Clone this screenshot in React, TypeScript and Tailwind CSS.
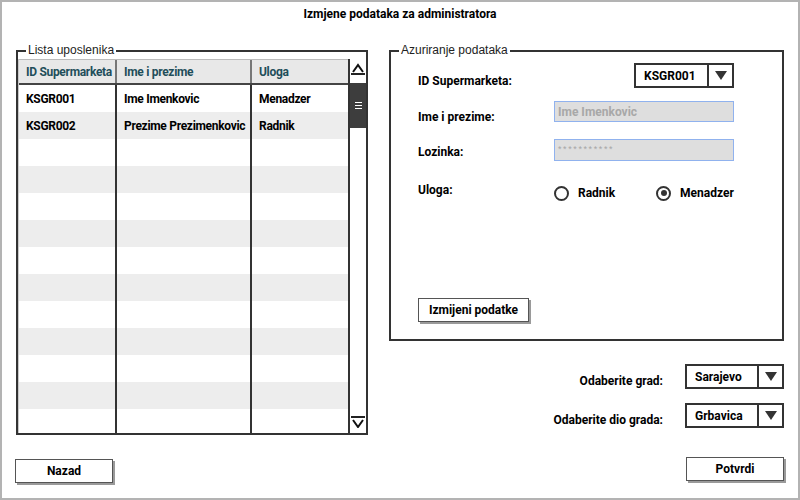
const rows = [
  { id: 'KSGR001', name: 'Ime Imenkovic', role: 'Menadzer' },
  { id: 'KSGR002', name: 'Prezime Prezimenkovic', role: 'Radnik' },
  ...Array.from({ length: 11 }, () => ({ id: '', name: '', role: '' })),
];

const narrow = "font-['Liberation_Sans_Narrow',Roboto,sans-serif] font-bold";
const legend = "ml-[8px] px-[2px] font-['Liberation_Sans',Arial,sans-serif] text-[12px] leading-[13px] text-[#222]";

function Dropdown({ value, width, split }: { value: string; width: string; split: string }) {
  return (
    <div className={`flex h-[25px] border-2 border-[#333] bg-white ${width}`}>
      <div className={`flex items-center pl-[8px] text-[12px] text-black ${narrow} ${split}`}>{value}</div>
      <div className="flex flex-1 items-center justify-center border-l-2 border-[#333]">
        <svg width="12" height="9" viewBox="0 0 12 9">
          <path d="M0 0 H12 L6 9 Z" fill="#333" />
        </svg>
      </div>
    </div>
  );
}

function Button({ label, className }: { label: string; className: string }) {
  return (
    <div
      className={`flex h-[24px] items-center justify-center border border-[#555] bg-white text-[12px] text-black shadow-[2px_2px_0_#9a9a9a] ${narrow} ${className}`}
    >
      {label}
    </div>
  );
}

function Radio({ checked, label, className = '' }: { checked?: boolean; label: string; className?: string }) {
  return (
    <div className={`flex items-center gap-[9px] ${className}`}>
      <div className="flex h-[15px] w-[15px] items-center justify-center rounded-full border-2 border-[#333]">
        {checked && <div className="h-[6px] w-[6px] rounded-full bg-[#333]" />}
      </div>
      <span className={`text-[12px] text-black ${narrow}`}>{label}</span>
    </div>
  );
}

function Scrollbar() {
  return (
    <div className="flex w-[18px] flex-col border-l-2 border-[#333] bg-white">
      <div className="mx-[1px] flex h-[16px] items-end justify-center border-b-2 border-[#222]">
        <svg width="12" height="10" viewBox="0 0 12 10">
          <path d="M1 9 L6 2 L11 9" fill="none" stroke="#111" strokeWidth="2" />
        </svg>
      </div>
      <div className="h-[8px]" />
      <div className="flex h-[45px] flex-col items-center justify-center gap-[2px] bg-[#3d3d3d]">
        <div className="h-[1px] w-[7px] bg-white" />
        <div className="h-[1px] w-[7px] bg-white" />
        <div className="h-[1px] w-[7px] bg-white" />
      </div>
      <div className="flex-1" />
      <div className="mx-[1px] flex h-[17px] items-start justify-center border-t-2 border-[#222]">
        <svg width="12" height="10" viewBox="0 0 12 10">
          <path d="M1 2 L6 9 L11 2" fill="none" stroke="#111" strokeWidth="2" />
        </svg>
      </div>
    </div>
  );
}

export default function App() {
  return (
    <div className="flex h-[500px] w-[800px] flex-col overflow-hidden border-2 border-[#b3b3b3] bg-white">
      <div className={`h-[42px] pt-[4px] text-center text-[12px] leading-[16px] text-black ${narrow}`}>
        Izmjene podataka za administratora
      </div>

      <div className="flex h-[391px]">
        <fieldset className="ml-[14px] h-[391px] w-[352px] border-2 border-[#333]">
          <legend className={legend}>Lista uposlenika</legend>
          <div className="mt-[2px] flex h-[374px] overflow-hidden">
            <div className="flex-1 overflow-hidden border-l border-[#c8c8c8]">
              <div className="grid h-[26px] grid-cols-[98px_135px_96px] border-t border-b-2 border-t-[#bbb] border-b-[#444] bg-[#e8e8e8] text-[12px] tracking-[-0.3px] text-[#1f4e5a]">
                <div className={`flex items-center border-r-2 border-[#777] pl-[7px] ${narrow}`}>ID Supermarketa</div>
                <div className={`flex items-center border-r-2 border-[#777] pl-[7px] ${narrow}`}>Ime i prezime</div>
                <div className={`flex items-center pl-[7px] ${narrow}`}>Uloga</div>
              </div>
              {rows.map((r, i) => (
                <div
                  key={i}
                  className={`grid h-[27px] grid-cols-[98px_135px_96px] text-[12px] tracking-[-0.3px] text-black ${i % 2 === 1 ? 'bg-[#ededed]' : 'bg-white'}`}
                >
                  <div className={`flex items-center border-r-2 border-[#333] pl-[7px] ${narrow}`}>{r.id}</div>
                  <div className={`flex items-center whitespace-nowrap border-r-2 border-[#333] pl-[7px] ${narrow}`}>{r.name}</div>
                  <div className={`flex items-center pl-[7px] ${narrow}`}>{r.role}</div>
                </div>
              ))}
            </div>
            <Scrollbar />
          </div>
        </fieldset>

        <div className="ml-[21px] flex w-[395px] flex-col">
          <fieldset className="h-[297px] border-2 border-[#333]">
            <legend className={legend}>Azuriranje podataka</legend>
            <div className="flex h-[281px] flex-col pl-[27px]">
              <div className="mt-[6px] flex h-[25px] items-start">
                <div className={`w-[216px] pt-[10px] text-[12px] leading-[16px] text-black ${narrow}`}>ID Supermarketa:</div>
                <Dropdown value="KSGR001" width="w-[100px]" split="w-[71px]" />
              </div>
              <div className="mt-[13px] flex h-[21px] items-start">
                <div className={`w-[136px] pt-[8px] text-[12px] leading-[16px] text-black ${narrow}`}>Ime i prezime:</div>
                <div className={`flex h-[21px] w-[180px] items-center border border-[#90b2ee] bg-[#dedede] pl-[3px] text-[12px] text-[#a8a8a8] ${narrow}`}>
                  Ime Imenkovic
                </div>
              </div>
              <div className="mt-[17px] flex h-[22px] items-start">
                <div className={`w-[136px] pt-[5px] text-[12px] leading-[16px] text-black ${narrow}`}>Lozinka:</div>
                <div className="flex h-[22px] w-[180px] items-center border border-[#90b2ee] bg-[#dedede] pl-[3px] font-['Liberation_Sans',Arial,sans-serif] text-[9px] tracking-[1.6px] text-[#a6a6a6]">
                  ***********
                </div>
              </div>
              <div className="mt-[20px] flex h-[22px] items-start">
                <div className={`w-[136px] pt-[1px] text-[12px] leading-[16px] text-black ${narrow}`}>Uloga:</div>
                <div className="flex pt-[3px]">
                  <Radio label="Radnik" className="w-[102px]" />
                  <Radio checked label="Menadzer" />
                </div>
              </div>
              <Button label="Izmijeni podatke" className="mt-auto mb-[16px] w-[111px]" />
            </div>
          </fieldset>

          <div className="mt-[23px] flex items-start justify-end">
            <div className={`mr-[22px] pt-[9px] text-[12px] leading-[16px] text-black ${narrow}`}>Odaberite grad:</div>
            <Dropdown value="Sarajevo" width="w-[99px]" split="w-[70px]" />
          </div>
          <div className="mt-[14px] flex items-start justify-end">
            <div className={`mr-[22px] pt-[9px] text-[12px] leading-[16px] text-black ${narrow}`}>Odaberite dio grada:</div>
            <Dropdown value="Grbavica" width="w-[99px]" split="w-[70px]" />
          </div>
        </div>
      </div>

      <div className="flex items-start justify-between">
        <Button label="Nazad" className="ml-[13px] mt-[24px] w-[98px]" />
        <Button label="Potvrdi" className="mr-[14px] mt-[22px] w-[98px]" />
      </div>
    </div>
  );
}
